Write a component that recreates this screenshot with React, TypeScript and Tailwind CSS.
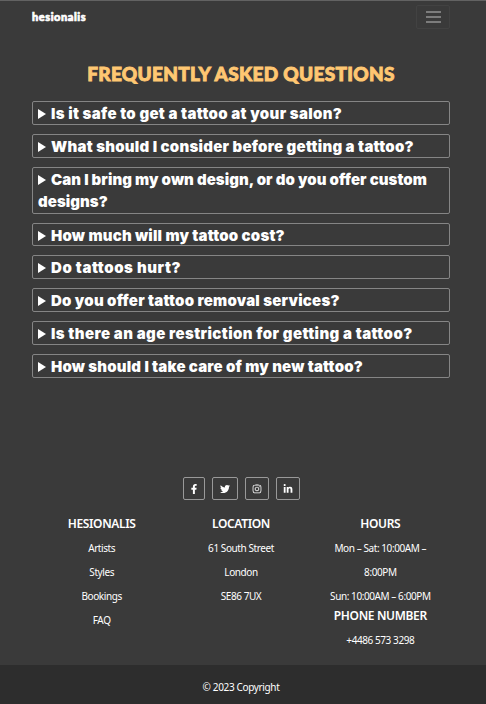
import React from "react";
import { FaFacebookF, FaTwitter, FaInstagram, FaLinkedinIn } from "react-icons/fa";

const questions = [
  { text: "Is it safe to get a tattoo at your salon?", style: "h-6 tracking-[0.33px]" },
  { text: "What should I consider before getting a tattoo?", style: "h-6 tracking-[0.25px]" },
  { text: "Can I bring my own design, or do you offer custom", rest: "designs?", style: "h-[47px] tracking-[0.06px]" },
  { text: "How much will my tattoo cost?", style: "h-[23px] tracking-[0.19px]" },
  { text: "Do tattoos hurt?", style: "h-6 tracking-[0.55px]" },
  { text: "Do you offer tattoo removal services?", style: "h-6 tracking-[0.21px]" },
  { text: "Is there an age restriction for getting a tattoo?", style: "h-6 tracking-[0.4px]" },
  { text: "How should I take care of my new tattoo?", style: "h-6 tracking-[0.18px]" },
];

const socials = [
  { Icon: FaFacebookF, width: "w-[22px]" },
  { Icon: FaTwitter, width: "w-[26px]" },
  { Icon: FaInstagram, width: "w-6" },
  { Icon: FaLinkedinIn, width: "w-6" },
];

function Heading({ children }: { children: React.ReactNode }) {
  return <h2 className="text-[12px] font-semibold leading-[15px] tracking-[-0.35px] whitespace-nowrap">{children}</h2>;
}

function Line({ children }: { children: React.ReactNode }) {
  return <p className="h-6 text-[10px] leading-6 tracking-[-0.42px] whitespace-nowrap">{children}</p>;
}

export default function App() {
  return (
    <div className="flex h-[704px] w-[486px] flex-col overflow-hidden border-t border-[#626262] bg-[#3a3a3a] font-['Noto_Sans','Open_Sans',sans-serif] text-white">
      <header className="flex h-8 items-center justify-between pr-9 pl-8">
        <span className="font-['Lato',sans-serif] text-[11px] leading-4 font-black tracking-[0.55px] [-webkit-text-stroke:0.7px_white]">
          hesionalis
        </span>
        <button className="flex h-6 w-[34px] items-center justify-center rounded-[2px] border border-[#424242]">
          <svg className="h-3 w-[15px]" viewBox="0 0 15 12" stroke="#929292" strokeWidth="1.4">
            <path d="M0 1h15M0 6h15M0 11h15" />
          </svg>
        </button>
      </header>

      <main className="h-[444px] pt-[29px] pr-9 pl-8">
        <h1 className="h-[39px] text-center font-['Lato',sans-serif] text-[19px] leading-[23px] font-black tracking-[0.3px] whitespace-nowrap text-[#ffc772] [-webkit-text-stroke:0.9px_#ffc772]">
          FREQUENTLY ASKED QUESTIONS
        </h1>
        <div className="flex flex-col gap-[9px]">
          {questions.map((q) => (
            <div
              key={q.text}
              className={
                "rounded-[2px] border border-[#858585] pt-px pl-[5px] font-['Inter',sans-serif] text-[15px] leading-[22px] font-black whitespace-nowrap " +
                q.style
              }
            >
              <div className="flex items-center">
                <svg className="mr-[5px] h-[10px] w-[8px] shrink-0" viewBox="0 0 8 10" fill="white">
                  <path d="M0 0L8 5L0 10Z" />
                </svg>
                <span>{q.text}</span>
              </div>
              {q.rest && <span className="block">{q.rest}</span>}
            </div>
          ))}
        </div>
      </main>

      <footer className="flex flex-1 flex-col">
        <div className="flex justify-center gap-[7px] pr-[3px]">
          {socials.map(({ Icon, width }, i) => (
            <a key={i} className={"flex h-[23px] items-center justify-center rounded-[2px] border border-[#999999] " + width}>
              <Icon size={10} />
            </a>
          ))}
        </div>
        <div className="mt-4 grid h-[149px] grid-cols-3 pr-9 pl-8 text-center">
          <div>
            <Heading>HESIONALIS</Heading>
            <div className="mt-[5px]">
              <Line>Artists</Line>
              <Line>Styles</Line>
              <Line>Bookings</Line>
              <Line>FAQ</Line>
            </div>
          </div>
          <div>
            <Heading>LOCATION</Heading>
            <div className="mt-[5px]">
              <Line>61 South Street</Line>
              <Line>London</Line>
              <Line>SE86 7UX</Line>
            </div>
          </div>
          <div>
            <Heading>HOURS</Heading>
            <div className="mt-[5px]">
              <Line>Mon – Sat: 10:00AM –</Line>
              <Line>8:00PM</Line>
              <Line>Sun: 10:00AM – 6:00PM</Line>
            </div>
            <Heading>PHONE NUMBER</Heading>
            <div className="mt-[5px]">
              <Line>+4486 573 3298</Line>
            </div>
          </div>
        </div>
        <div className="flex flex-1 items-center justify-center bg-[#2d2d2d] pt-[5px] pr-1 text-[10px] tracking-[-0.35px]">
          © 2023 Copyright
        </div>
      </footer>
    </div>
  );
}
